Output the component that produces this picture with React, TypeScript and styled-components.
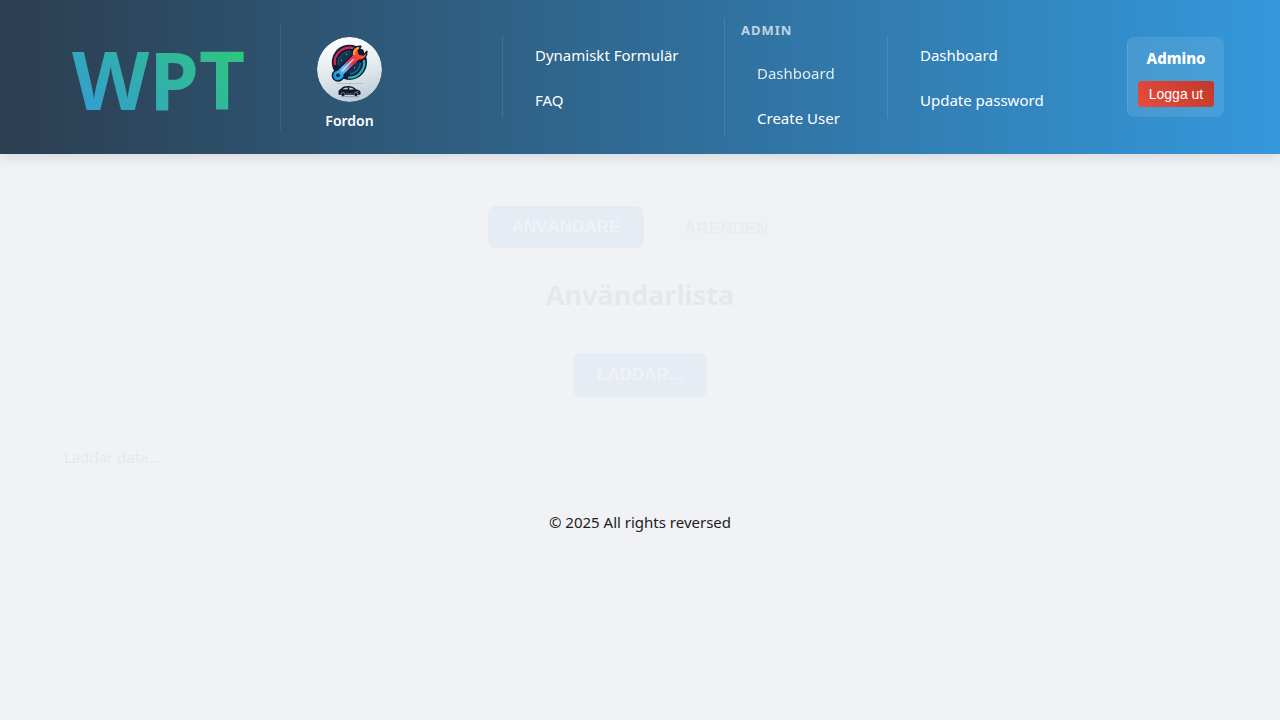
import React from 'react';
import styled, { createGlobalStyle } from 'styled-components';

const GlobalStyle = createGlobalStyle`
  * { box-sizing: border-box; }
  body {
    margin: 0;
    background: #f0f2f5;
    color: #212121;
    font-family: 'Noto Sans', 'Open Sans', sans-serif;
    font-size: 15px;
    line-height: 24px;
  }
`;

const Header = styled.header`
  display: grid;
  grid-template-columns: 224fr 222fr 222fr 163fr 240fr 97fr;
  align-items: center;
  min-height: 154px;
  padding: 16px 56px;
  background: linear-gradient(90deg, #2c3e50, #3498db);
  box-shadow: 0 4px 12px rgba(0, 0, 0, 0.1);
`;

const Logo = styled.a`
  justify-self: start;
  margin-left: 16px;
  padding-top: 4px;
  font-size: 80px;
  font-weight: 700;
  line-height: 104px;
  text-decoration: none;
  color: transparent;
  background: linear-gradient(45deg, #3498db, #2ecc71);
  background-clip: text;
  -webkit-background-clip: text;
`;

const Section = styled.nav`
  display: flex;
  flex-direction: column;
  align-items: flex-start;
  gap: 8px;
  padding-left: 16px;
  border-left: 1px solid rgba(255, 255, 255, 0.1);
`;

const SectionTitle = styled.h2`
  margin: 0 0 6px;
  padding-top: 2px;
  font-size: 13px;
  line-height: 20px;
  font-weight: 700;
  letter-spacing: 1px;
  text-transform: uppercase;
  color: rgba(255, 255, 255, 0.7);
`;

const NavLink = styled.a<{ $dim?: boolean }>`
  padding: 9px 16px 7px;
  line-height: 21px;
  white-space: nowrap;
  text-decoration: none;
  color: #fff;
  border-radius: 4px;
  opacity: ${(p) => (p.$dim ? 0.85 : 1)};
`;

const VehicleLink = styled.a`
  display: flex;
  flex-direction: column;
  align-items: center;
  gap: 9px;
  margin-left: 20px;
  padding: 12px 0 0;
  font-size: 14px;
  line-height: 19px;
  font-weight: 600;
  text-decoration: none;
  color: #fff;
`;

const Emblem = styled.svg`
  display: block;
  width: 65px;
  height: 65px;
  border-radius: 50%;
`;

const UserBox = styled.div`
  display: flex;
  flex-direction: column;
  align-items: center;
  gap: 12px;
  padding: 10px;
  border-left: 1px solid rgba(255, 255, 255, 0.1);
  border-radius: 8px;
  background: rgba(255, 255, 255, 0.1);
`;

const UserName = styled.span`
  font-weight: 800;
  line-height: 22px;
  color: #fff;
`;

const LogoutButton = styled.button`
  width: 100%;
  height: 26px;
  padding: 0;
  border: 0;
  border-radius: 3px;
  background: linear-gradient(45deg, #e74c3c, #c0392b);
  color: #fff;
  font-family: 'Liberation Sans', Arial, sans-serif;
  font-size: 14px;
  white-space: nowrap;
  cursor: pointer;
`;

const Main = styled.main`
  display: flex;
  flex-direction: column;
  align-items: center;
  padding: 52px 64px 0;
  opacity: 0.05;
`;

const Tabs = styled.div`
  display: flex;
  align-items: flex-start;
  gap: 16px;
`;

const ActionButton = styled.button<{ $plain?: boolean; $tall?: boolean }>`
  height: ${(p) => (p.$tall ? 44 : 42)}px;
  margin-top: ${(p) => (p.$plain ? 2 : 0)}px;
  padding: 0 24px;
  border: 0;
  border-radius: 8px;
  background: ${(p) => (p.$plain ? '#ecf0f1' : 'linear-gradient(45deg, #3486db 85%, #2ea98f)')};
  color: ${(p) => (p.$plain ? '#7f8c8d' : '#fff')};
  box-shadow: 0 2px 4px rgba(0, 0, 0, 0.1);
  font-family: 'Liberation Sans', Arial, sans-serif;
  font-size: 17px;
  font-weight: 700;
  text-transform: uppercase;
`;

const ListTitle = styled.h1`
  margin: 24px 0 37px;
  font-size: 27px;
  line-height: 42px;
  font-weight: 700;
  color: #2c3e50;
`;

const Status = styled.p`
  align-self: stretch;
  margin: 48px 0 0;
`;

const Footer = styled.footer`
  padding: 41px 16px 16px;
  text-align: center;
`;

function VehicleEmblem() {
  return (
    <Emblem viewBox="0 0 65 65" aria-hidden="true">
      <defs>
        <linearGradient id="plate" x1="0.4" y1="0" x2="0.6" y2="1">
          <stop offset="0" stopColor="#ffffff" />
          <stop offset="0.5" stopColor="#e3eaed" />
          <stop offset="1" stopColor="#bdccd6" />
        </linearGradient>
        <linearGradient id="wrench" gradientUnits="userSpaceOnUse" x1="20" y1="41" x2="48" y2="13">
          <stop offset="0" stopColor="#1695e8" />
          <stop offset="0.3" stopColor="#65b9f2" />
          <stop offset="0.45" stopColor="#a064a5" />
          <stop offset="0.55" stopColor="#f52a4c" />
          <stop offset="0.8" stopColor="#ff4a32" />
          <stop offset="1" stopColor="#ff8a2f" />
        </linearGradient>
      </defs>
      <circle cx="32.5" cy="32.5" r="32.5" fill="url(#plate)" />
      <circle cx="32.4" cy="25.3" r="17.6" fill="#101d38" />
      <circle cx="32" cy="25.5" r="11" fill="#12344a" />
      <path d="M18 28A14.5 14.5 0 0 1 38 12" fill="none" stroke="#d92950" strokeWidth="2.2" />
      <path d="M21 28A12 12 0 0 1 33 14.500" fill="none" stroke="#1d5f70" strokeWidth="1" />
      <path d="M47 23A15 15 0 0 1 31 40.500" fill="none" stroke="#23b9b6" strokeWidth="2.2" />
      <path d="M43.500 26A12 12 0 0 1 33 37" fill="none" stroke="#1769a0" strokeWidth="1.500" />
      <path d="M24 24l1-1M29 18l1-1M37 31l1-1M39 27l1-1" stroke="#58d0c3" strokeWidth="1" />
      <path
        d="M44 9.300c-5.500-.6-9.600 3.200-8.700 8.600L20.500 33c-4.200.6-6.200 4.600-4.700 7.800 1.900 4 8 4.300 10.400.4.800-1.200 1.200-2.500 1.100-3.800l14.800-14.200c4.600.3 8.300-3.500 7.800-8.900l-3.400 3.700-4-.7-1.300-4Z"
        fill="url(#wrench)"
        stroke="#0b1832"
        strokeWidth="1.400"
        strokeLinejoin="round"
      />
      <path d="M24.500 34.500l12-12.300" stroke="#cfe6fa" strokeWidth="1.200" />
      <path d="M28 36.300l12-11.600" stroke="#7d2870" strokeWidth="1" />
      <path d="M37 18c-.1-4 2-6.600 5-7.100" fill="none" stroke="#ffa035" strokeWidth="2.400" />
      <path d="M41 14l2.700-2.600 3 1.600.2 3.700-3.200 1.300-2.500-1.500Z" fill="#10192f" />
      <circle cx="21" cy="38.300" r="2.500" fill="#0b2446" stroke="#2fb9ee" strokeWidth="1" />
      <path d="M20 46.500h26" stroke="#a9b8c3" strokeWidth="0.800" />
      <path d="M24 59.700h18" stroke="#8196b8" strokeWidth="1" />
      <path
        d="M21.600 57.700l-.1-4 2-1.800 2.600-2.200c3.300-1.100 7.100-1 10 .2l3.200 2.300 3.200 1.200 1.200 1.900-.4 2.400-2.300.3H23Z"
        fill="#101a2e"
      />
      <path d="M25.500 52.300l2-1.400 3.200-.4v1.700ZM32.200 50.500l2.800.4 2.200 1.500h-5Z" fill="#c4d1da" />
      <path d="M29 57h6.500M39 54.600l2.500.4" stroke="#9fb0bd" strokeWidth="0.600" />
      <circle cx="26" cy="57.500" r="2" fill="#0b1426" stroke="#d2dce3" strokeWidth="0.500" />
      <circle cx="38.900" cy="57.500" r="2" fill="#0b1426" stroke="#d2dce3" strokeWidth="0.500" />
    </Emblem>
  );
}

export default function App() {
  return (
    <>
      <GlobalStyle />
      <Header>
        <Logo href="#">WPT</Logo>
        <Section>
          <VehicleLink href="#fordon">
            <VehicleEmblem />
            Fordon
          </VehicleLink>
        </Section>
        <Section>
          <NavLink href="#formular">Dynamiskt Formulär</NavLink>
          <NavLink href="#faq">FAQ</NavLink>
        </Section>
        <Section>
          <SectionTitle>Admin</SectionTitle>
          <NavLink href="#admin" $dim>Dashboard</NavLink>
          <NavLink href="#create-user">Create User</NavLink>
        </Section>
        <Section>
          <NavLink href="#dashboard">Dashboard</NavLink>
          <NavLink href="#password">Update password</NavLink>
        </Section>
        <UserBox>
          <UserName>Admino</UserName>
          <LogoutButton type="button">Logga ut</LogoutButton>
        </UserBox>
      </Header>
      <Main>
        <Tabs>
          <ActionButton type="button">Användare</ActionButton>
          <ActionButton type="button" $plain>Ärenden</ActionButton>
        </Tabs>
        <ListTitle>Användarlista</ListTitle>
        <ActionButton type="button" $tall>Laddar...</ActionButton>
        <Status>Laddar data...</Status>
      </Main>
      <Footer>© 2025 All rights reversed</Footer>
    </>
  );
}
